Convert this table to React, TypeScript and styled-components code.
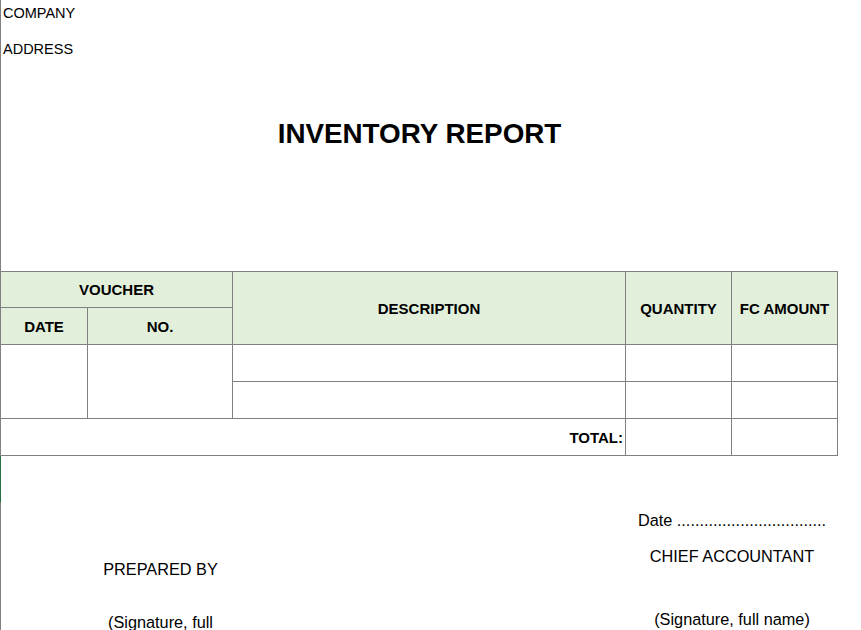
import React from "react";
import styled, { createGlobalStyle } from "styled-components";

const GlobalStyle = createGlobalStyle`
  html, body { margin: 0; padding: 0; background: #ffffff; }
  body { font-family: "Liberation Sans", Arial, sans-serif; color: #000; }
  * { box-sizing: border-box; }
`;

const LINE = "#808080";
const HEAD_BG = "#e2efda";
const COLS = "87px 145px 393px 106px 106px";

const Sheet = styled.div`
  display: flex;
  width: 861px;
  height: 630px;
  overflow: hidden;
`;

const Gutter = styled.div`
  flex: 0 0 1px;
  background: linear-gradient(
    to bottom,
    ${LINE} 0px,
    ${LINE} 456px,
    #217346 456px,
    #217346 502px,
    ${LINE} 502px,
    ${LINE} 100%
  );
`;

const Content = styled.div`
  width: 837px;
`;

const InfoLine = styled.div<{ $h: number }>`
  height: ${(p) => p.$h}px;
  display: flex;
  align-items: center;
  padding-left: 2px;
  font-size: 14.5px;
`;

const TitleRow = styled.div`
  height: 124px;
  display: flex;
  align-items: center;
  justify-content: center;
  margin-bottom: 75px;
`;

const Title = styled.h1`
  margin: 0;
  font-size: 27.8px;
  font-weight: 700;
`;

const Grid = styled.div`
  display: grid;
  grid-template-columns: ${COLS};
  grid-template-rows: 36px 37px 37px 37px 37px;
  border-top: 1px solid ${LINE};
`;

const Cell = styled.div<{
  $col: string;
  $row: string;
  $head?: boolean;
  $align?: "center" | "flex-end";
}>`
  grid-column: ${(p) => p.$col};
  grid-row: ${(p) => p.$row};
  border-right: 1px solid ${LINE};
  border-bottom: 1px solid ${LINE};
  background: ${(p) => (p.$head ? HEAD_BG : "#fff")};
  display: flex;
  align-items: center;
  justify-content: ${(p) => p.$align || "center"};
  padding-right: ${(p) => (p.$align === "flex-end" ? "2px" : "0")};
  font-size: 15px;
  font-weight: 700;
  white-space: nowrap;
`;

const Footer = styled.div`
  display: grid;
  grid-template-columns: ${COLS};
  font-size: 16.3px;
`;

const SignBlock = styled.div<{ $col: string; $pad: number }>`
  grid-column: ${(p) => p.$col};
  display: flex;
  flex-direction: column;
  align-items: center;
  text-align: center;
  padding-top: ${(p) => p.$pad}px;
`;

const SignText = styled.div<{ $gap: number }>`
  line-height: 18px;
  margin-top: ${(p) => p.$gap}px;
`;

export default function App() {
  return (
    <>
      <GlobalStyle />
      <Sheet>
        <Gutter />
        <Content>
          <InfoLine $h={26}>COMPANY</InfoLine>
          <InfoLine $h={46}>ADDRESS</InfoLine>
          <TitleRow>
            <Title>INVENTORY REPORT</Title>
          </TitleRow>
          <Grid>
            <Cell $col="1 / 3" $row="1" $head>VOUCHER</Cell>
            <Cell $col="3" $row="1 / 3" $head>DESCRIPTION</Cell>
            <Cell $col="4" $row="1 / 3" $head>QUANTITY</Cell>
            <Cell $col="5" $row="1 / 3" $head>FC AMOUNT</Cell>
            <Cell $col="1" $row="2" $head>DATE</Cell>
            <Cell $col="2" $row="2" $head>NO.</Cell>

            <Cell $col="1" $row="3 / 5" />
            <Cell $col="2" $row="3 / 5" />
            <Cell $col="3" $row="3" />
            <Cell $col="4" $row="3" />
            <Cell $col="5" $row="3" />
            <Cell $col="3" $row="4" />
            <Cell $col="4" $row="4" />
            <Cell $col="5" $row="4" />

            <Cell $col="1 / 4" $row="5" $align="flex-end">TOTAL:</Cell>
            <Cell $col="4" $row="5" />
            <Cell $col="5" $row="5" />
          </Grid>
          <Footer>
            <SignBlock $col="2" $pad={104}>
              <SignText $gap={0}>PREPARED BY</SignText>
              <SignText $gap={35}>(Signature, full name)</SignText>
            </SignBlock>
            <SignBlock $col="4 / 6" $pad={55}>
              <SignText $gap={0}>Date .................................</SignText>
              <SignText $gap={18}>CHIEF ACCOUNTANT</SignText>
              <SignText $gap={45}>(Signature, full name)</SignText>
            </SignBlock>
          </Footer>
        </Content>
      </Sheet>
    </>
  );
}
